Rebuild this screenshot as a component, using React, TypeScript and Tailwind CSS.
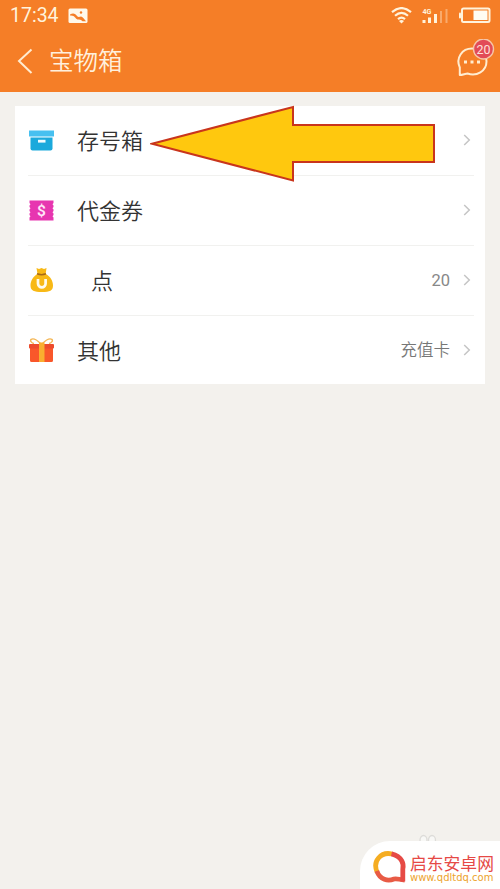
import type { ReactNode } from "react";

const cjk = "font-['Noto_Sans_CJK_SC',sans-serif]";

function StatusBar() {
  return (
    <div className="flex h-[31px] items-center pl-[10px] pr-[9px] text-[#fff3dc]">
      <span className="w-[58px] font-[Roboto,sans-serif] text-[19.500px] leading-[31px]">17:34</span>
      <svg className="h-[16px] w-[20px]" viewBox="0 0 20 16">
        <rect x="0.5" y="0.5" width="19" height="14.500" rx="1.5" fill="#fff8ea" />
        <path d="M2 6.500C5 4.500 7.500 5.500 9 8C10.500 10 12 8.500 13 8.500C14.500 8.500 16 11 18 13.200H14.500C13 11.500 11.500 11.500 9.500 11.500C7 10.500 7 7 2 7.500Z" fill="#f57e27" />
        <circle cx="13" cy="4.500" r="1.200" fill="#f57e27" />
      </svg>
      <svg className="ml-auto h-[18px] w-[21px]" viewBox="0 0 21 18" fill="none" stroke="#fff3dc" strokeWidth="2.200">
        <path d="M1 5.200Q10.500 -3 20 5.200" />
        <path d="M4 8.800Q10.500 3 17 8.800" />
        <path d="M7 12.100Q10.500 9 14 12.100" />
        <path d="M8 14L10.500 16.500L13 14Q10.500 12 8 14Z" fill="#fff3dc" stroke="none" />
      </svg>
      <svg className="ml-[10px] h-[18px] w-[27px]" viewBox="0 0 27 18">
        <text x="0.500" y="6.800" fontSize="8" fontWeight="700" fontFamily="Roboto, sans-serif" textLength="9" lengthAdjust="spacingAndGlyphs" fill="#fff3dc">4G</text>
        <path d="M0.500 13h3v3h-3zM6 10.500h3v5.500H6zM12 7h3v9h-3z" fill="#fff3dc" />
        <path d="M18 4h2v12h-2zM23.500 2h2v14h-2z" fill="#f9aa6c" />
      </svg>
      <svg className="ml-[10px] h-[17px] w-[32px]" viewBox="0 0 32 17">
        <rect x="3" y="1.500" width="27.500" height="13.500" rx="1.500" fill="none" stroke="#fff3dc" strokeWidth="2" />
        <rect x="0" y="5.500" width="2" height="6" rx="1" fill="#fff3dc" />
        <rect x="14.500" y="3.500" width="14" height="9.500" fill="#fffdf4" />
      </svg>
    </div>
  );
}

function TitleBar() {
  return (
    <div className="flex h-[61px] items-center pl-[17px] pr-[5px]">
      <svg className="relative top-[-1px] h-[26px] w-[16px]" viewBox="0 0 16 26" fill="none" stroke="#ffecd0" strokeWidth="2">
        <path d="M14.500 1.500L2 13L14.500 25" />
      </svg>
      <h1 className={`${cjk} relative top-[-2px] ml-[16px] text-[24.500px] font-[350] leading-[36px] text-[#fff0dc]`}>宝物箱</h1>
      <svg className="relative top-[-2px] ml-auto h-[42px] w-[40px]" viewBox="0 0 40 42">
        <path d="M4.800 36V28.500C0.500 19 7 9.500 17 9.500C25 9.500 31.500 15.500 31.500 22.500C31.500 32 21.500 38 12.500 34.500C10.500 34.500 7.500 36 4.800 36Z" fill="none" stroke="#ffecd0" strokeWidth="2" strokeLinejoin="round" />
        <path d="M9 21.500h3v3h-3zM15.500 21.500h3v3h-3zM22 21.500h3v3h-3z" fill="#ffecd0" />
        <circle cx="28.500" cy="10" r="10" fill="#e24b57" stroke="#f6c6a8" strokeWidth="1.400" />
        <text x="28.500" y="14.500" textAnchor="middle" fontSize="12.500" fontWeight="400" fontFamily="Roboto, sans-serif" fill="#ffe0da">20</text>
      </svg>
    </div>
  );
}

function BoxIcon() {
  return (
    <svg className="h-[28px] w-[28px]" viewBox="0 0 28 28">
      <path d="M1 3.500h25v6H1z" fill="#47c0f0" />
      <path d="M2.500 10.500h22v11a2 2 0 0 1-2 2h-18a2 2 0 0 1-2-2z" fill="#1ba9dc" />
      <rect x="10" y="12.800" width="7.500" height="2.800" fill="#f1fbff" />
    </svg>
  );
}

function CouponIcon() {
  return (
    <svg className="h-[28px] w-[28px]" viewBox="0 0 28 28">
      <path d="M1.500 3.500h24v2.500l-1 1.200 1 1.200v1.600l-1 1.200 1 1.200v1.600l-1 1.200 1 1.200v1.600l-1 1.200 1 1.200v3.100h-24v-3.100l1-1.200-1-1.200v-1.600l1-1.200-1-1.200v-1.600l1-1.200-1-1.200V8.400l1-1.200-1-1.200z" fill="#e736b0" />
      <text x="13.500" y="18.800" textAnchor="middle" fontSize="15.500" fontWeight="600" fontFamily="Roboto, sans-serif" fill="#ffe6f8">$</text>
    </svg>
  );
}

function CoinBagIcon() {
  return (
    <svg className="h-[28px] w-[28px]" viewBox="0 0 28 28">
      <path d="M8.500 1l2.500 1 2.500-1 2.500 1 2.500-1-.8 6C22.500 9.500 25 14 25 18.500C25 23.500 22 25 14 25C6 25 2.500 23.500 2.500 18.500C2.500 14 5 9.500 9.500 7z" fill="#f8b916" />
      <path d="M9 6.800Q13.500 8.500 18 6.800" fill="none" stroke="#a86a18" strokeWidth="1.500" />
      <path d="M10 12v4.500a3.800 3.800 0 0 0 7.600 0v-4.500" fill="none" stroke="#fffbed" strokeWidth="2.700" />
    </svg>
  );
}

function GiftIcon() {
  return (
    <svg className="h-[28px] w-[28px]" viewBox="0 0 28 28">
      <path d="M12.500 6.500C9 3 5 1.300 3.200 2.300C1.500 4 4 6 6 6.500M14.500 6.500C18 3 22 1.300 23.800 2.300C25.500 4 23 6 21 6.500" fill="none" stroke="#f4b654" strokeWidth="1.400" />
      <path d="M2 10.500h23v13a1.500 1.500 0 0 1-1.500 1.500h-20a1.500 1.500 0 0 1-1.500-1.500z" fill="#f9572a" />
      <rect x="1" y="7" width="25" height="4.500" rx="1" fill="#ed4b2c" />
      <rect x="11" y="5.500" width="5.500" height="19.500" fill="#faae2f" />
    </svg>
  );
}

type RowProps = { icon: ReactNode; label: string; value?: string; indent?: boolean; last?: boolean };

function Row({ icon, label, value, indent, last }: RowProps) {
  return (
    <li className={`ml-[13px] mr-[11px] flex items-center pr-[3px] ${last ? "h-[68px] pt-[2px]" : "h-[70px] border-b border-[#f1f1ef]"}`}>
      {icon}
      <span className={`${cjk} pb-[4px] text-[22px] font-[350] leading-[32px] text-[#333333] ${indent ? "ml-[35px]" : "ml-[21px]"}`}>{label}</span>
      <span className={`ml-auto font-[Roboto,'Noto_Sans_CJK_SC',sans-serif] text-[16.500px] leading-[24px] ${last ? "font-[350] text-[#777777]" : "pt-px font-normal text-[#888888]"}`}>{value}</span>
      <svg className="relative top-[-1px] ml-[13px] h-[12px] w-[8px]" viewBox="0 0 8 12" fill="none" stroke="#c5c5c5" strokeWidth="1.500">
        <path d="M1.200 1L6.300 6L1.200 11" />
      </svg>
    </li>
  );
}

function SiteBadge() {
  return (
    <div className="absolute bottom-0 right-0 h-[48px] w-[140px]">
      <svg className="absolute left-[58px] top-[-7px] h-[12px] w-[20px]" viewBox="0 0 20 12" fill="#f8f8f6" stroke="#dddcd9" strokeWidth="1.300">
        <ellipse cx="5.500" cy="6" rx="3.500" ry="4.500" />
        <ellipse cx="14" cy="6" rx="3.500" ry="4.500" />
      </svg>
      <div className="relative flex h-[48px] items-start rounded-tl-[30px] bg-white pl-[13px]">
        <svg className="mt-[9px] h-[34px] w-[34px] shrink-0" viewBox="0 0 34 34" fill="none" strokeWidth="4.800">
          <path d="M4.300 22.500C-1 11 8 1.500 19 4" stroke="#f5ad22" />
          <path d="M3.800 21C7 30 15 31.500 21 29C24 28 27 30 31.500 30" stroke="#e85b45" />
          <path d="M18.500 3.800C29.500 6.500 31 14.500 29.800 19V31.500" stroke="#e64a45" />
        </svg>
        <div className="ml-[3px] mt-[12px] flex w-[88px] flex-col">
          <div className={`${cjk} whitespace-nowrap text-[16.800px] leading-[20px] text-[#e64946]`}>启东安卓网</div>
          <div className="font-['DejaVu_Sans',sans-serif] mt-[-1px] whitespace-nowrap text-[10px] leading-[12px] text-[#eda32c]">www.qdltdq.com</div>
        </div>
      </div>
    </div>
  );
}

export default function App() {
  return (
    <div className="relative h-[889px] w-[500px] overflow-hidden bg-[#f3f1ed]">
      <header className="mb-[14px] bg-[#f57e27]">
        <StatusBar />
        <TitleBar />
      </header>
      <main className="relative mx-[15px] bg-white">
        <ul>
          <Row icon={<BoxIcon />} label="存号箱" />
          <Row icon={<CouponIcon />} label="代金券" />
          <Row icon={<CoinBagIcon />} label="点" value="20" indent />
          <Row icon={<GiftIcon />} label="其他" value="充值卡" last />
        </ul>
        <svg className="absolute left-[135px] top-[-1px] h-[78px] w-[286px]" viewBox="0 0 286 78">
          <path d="M2 38.700L143 2V20H284V57H143V75.500Z" fill="#ffc80e" stroke="#c9351c" strokeWidth="2" />
        </svg>
      </main>
      <SiteBadge />
    </div>
  );
}
